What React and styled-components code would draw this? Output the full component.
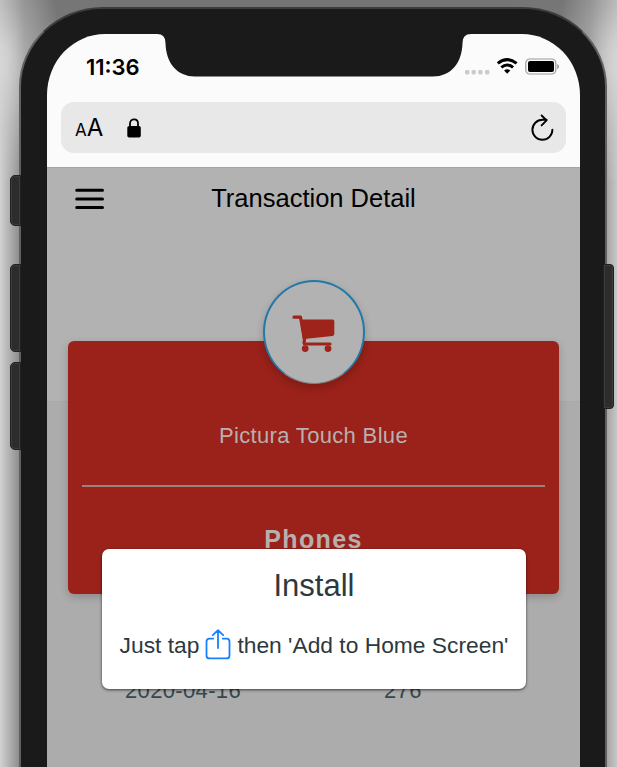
import React from "react";
import styled, { createGlobalStyle } from "styled-components";

const GlobalStyle = createGlobalStyle`
  * { box-sizing: border-box; }
  body { margin: 0; overflow: hidden; }
`;

const Stage = styled.main`
  position: relative;
  width: 617px;
  height: 767px;
  overflow: hidden;
  padding: 7px 0 0 19px;
  background:
    radial-gradient(ellipse 360px 90px at 50% 0, #747474 0%, #747474 55%, rgba(116, 116, 116, 0) 100%),
    linear-gradient(90deg, #d2d2d2 0, #7c7c7c 24px, #7c7c7c 590px, #a6a6a6 607px, #c6c6c6 617px);
  font-family: "Liberation Sans", Arial, sans-serif;
`;

const Phone = styled.div`
  position: relative;
  width: 588px;
  height: 900px;
  padding: 25px 25px 0 26px;
  border: 2px solid #606060;
  border-top-color: #3c3c3c;
  border-radius: 84px 84px 0 0 / 80px 80px 0 0;
  background: #1a1a1a;
`;

const CornerLight = styled.div`
  position: absolute;
  top: 0;
  ${(p) => p.$side}: 0;
  width: 100px;
  height: 180px;
  background: radial-gradient(
    ellipse 62px 130px at ${(p) => (p.$side === "left" ? "0" : "100%")} 64px,
    rgba(215, 215, 215, 0.9) 0%,
    rgba(205, 205, 205, 0.45) 50%,
    rgba(190, 190, 190, 0) 100%
  );
`;

const SideButton = styled.span`
  position: absolute;
  top: ${(p) => p.$top}px;
  ${(p) => p.$side}: ${(p) => (p.$side === "left" ? -11 : -9)}px;
  width: 11px;
  height: ${(p) => p.$height}px;
  border: 1px solid #202020;
  border-radius: ${(p) => (p.$side === "left" ? "5px 0 0 5px" : "0 4px 4px 0")};
  background: #2c2c2c;
  box-shadow: inset 0 0 0 1px #3c3c3c;
`;

const Screen = styled.div`
  position: relative;
  width: 533px;
  height: 733px;
  overflow: hidden;
  border-radius: 58px 58px 0 0 / 61px 61px 0 0;
  background: #fbfbfb;
`;

const Notch = styled.svg`
  position: absolute;
  top: 0;
  left: 110px;
`;

const StatusBar = styled.div`
  display: flex;
  justify-content: space-between;
  align-items: center;
  height: 68px;
  padding: 0 21px 3px 39px;
`;

const Clock = styled.time`
  font: 600 22px/26px Inter, sans-serif;
`;

const Indicators = styled.div`
  display: flex;
  align-items: center;
  height: 18px;
  padding-top: 1px;
`;

const AddressBar = styled.div`
  display: flex;
  align-items: center;
  height: 51px;
  margin: 0 14px;
  padding: 0 12px 0 14px;
  border-radius: 13px;
  background: #e8e8e8;
`;

const TextSize = styled.span`
  display: flex;
  align-items: baseline;
  width: 50px;
  padding-top: 2px;
  font: 400 17px/26px Inter, sans-serif;
`;

const LargeLetter = styled.span`
  font-size: 24px;
`;

const Reload = styled.svg`
  margin-left: auto;
`;

const WebPage = styled.div`
  height: 600px;
  margin-top: 14px;
  border-top: 1px solid #a5a5a5;
  background: #acacac;
`;

const Masthead = styled.header`
  height: 234px;
  border-bottom: 1px solid #a8a8a8;
  background: #b2b2b2;
`;

const TitleRow = styled.div`
  display: grid;
  grid-template-columns: 57px 1fr 57px;
  align-items: center;
  height: 62px;
`;

const MenuIcon = styled.svg`
  justify-self: end;
`;

const Title = styled.h1`
  margin: -2px 0 0;
  text-align: center;
  font-size: 25.5px;
  font-weight: 400;
  line-height: 30px;
  white-space: nowrap;
`;

const Card = styled.section`
  display: flex;
  flex-direction: column;
  align-items: center;
  width: 491px;
  height: 253px;
  margin: -61px 0 0 21px;
  padding: 0 14px;
  border-radius: 6px;
  background: #9a221a;
  color: #b8b0af;
  box-shadow: 0 3px 9px rgba(0, 0, 0, 0.2);
`;

const Badge = styled.div`
  display: flex;
  flex: none;
  align-items: center;
  justify-content: center;
  width: 102px;
  height: 104px;
  margin-top: -61px;
  border: 2px solid #2379a6;
  border-bottom: 1px solid #7b8084;
  border-radius: 50%;
  background: #b2b2b2;
  box-shadow: 0 4px 9px rgba(0, 0, 0, 0.2);
`;

const Product = styled.p`
  width: 100%;
  height: 64px;
  margin: 39px 0 0;
  border-bottom: 2px solid #98827f;
  text-align: center;
  font-size: 22px;
  line-height: 26px;
  letter-spacing: 0.33px;
`;

const Category = styled.h2`
  margin: 37px 0 0;
  font-size: 25px;
  line-height: 30px;
  letter-spacing: 1.4px;
`;

const Facts = styled.div`
  display: grid;
  grid-template-columns: 259px 1fr;
  padding: 84px 0 0 78px;
  color: #36474c;
  font-size: 22px;
  line-height: 26px;
  letter-spacing: 0.35px;
`;

const Prompt = styled.div`
  position: absolute;
  top: 515px;
  left: 55px;
  width: 424px;
  height: 140px;
  padding: 20px 0 0;
  border-radius: 7px;
  background: #fff;
  color: #2c393f;
  box-shadow: 0 1px 3px rgba(0, 0, 0, 0.65);
`;

const PromptTitle = styled.h3`
  margin: 0;
  text-align: center;
  font-size: 31px;
  font-weight: 400;
  line-height: 34px;
`;

const Instruction = styled.p`
  display: flex;
  align-items: center;
  justify-content: center;
  gap: 6px;
  margin: 25px 0 0;
  font-size: 22.8px;
  line-height: 34px;
  white-space: nowrap;
`;

const BUTTONS = [
  { side: "left", top: 166, height: 51 },
  { side: "left", top: 255, height: 88 },
  { side: "left", top: 353, height: 88 },
  { side: "right", top: 255, height: 145 },
];

function StatusIcons() {
  return (
    <Indicators>
      <svg width="94" height="18" viewBox="0 0 94 18">
        <g fill="#cbcbcb">
          {[0, 6.5, 13.2, 20].map((x) => (
            <rect key={x} x={x} y="12" width="4.4" height="4.4" rx="1.4" />
          ))}
        </g>
        <g fill="none" stroke="#000" strokeWidth="3">
          <path d="M32.8 5.4Q42.2-2.2 51.6 5.4" />
          <path d="M36.3 9.4Q42.2 4.6 48.1 9.4" />
        </g>
        <path d="M39.1 12.4Q42.2 9.9 45.3 12.4L42.2 15.8Z" />
        <rect x="60.8" y="1" width="30" height="15" rx="4" fill="none" stroke="#999" strokeWidth="1.2" />
        <rect x="63" y="3" width="26" height="11" rx="2" />
        <path d="M92.2 6v5.2q1.8-.8 1.8-2.6T92.2 6Z" fill="#999" />
      </svg>
    </Indicators>
  );
}

export default function App() {
  return (
    <Stage>
      <GlobalStyle />
      <CornerLight $side="left" />
      <CornerLight $side="right" />
      <Phone>
        {BUTTONS.map((b) => (
          <SideButton key={b.side + b.top} $side={b.side} $top={b.top} $height={b.height} />
        ))}
        <Screen>
          <Notch width="314" height="43" viewBox="0 0 314 43">
            <path d="M0 0Q8.5 0 8.5 9C9 29 20 42.5 38 42.5H276C294 42.5 305 29 305.5 9Q305.5 0 314 0Z" fill="#1a1a1a" />
          </Notch>
          <StatusBar>
            <Clock>11:36</Clock>
            <StatusIcons />
          </StatusBar>
          <AddressBar>
            <TextSize>A<LargeLetter>A</LargeLetter></TextSize>
            <svg width="18" height="22" viewBox="0 0 18 22">
              <path d="M5 10V6.5C5 1 13 1 13 6.5V10" fill="none" stroke="#000" strokeWidth="1.8" />
              <rect x="2.3" y="9" width="13.5" height="11.5" rx="1.8" />
            </svg>
            <Reload width="24" height="28" viewBox="0 0 24 28" fill="none" stroke="#000" strokeWidth="1.9" strokeLinecap="round" strokeLinejoin="round">
              <path d="M22.4 15.8A10 10 0 1 1 12.4 5.8H16.6M11.6 1.5L16.6 6.4L11.6 11.4" />
            </Reload>
          </AddressBar>
          <WebPage>
            <Masthead>
              <TitleRow>
                <MenuIcon width="29" height="22" viewBox="0 0 29 22" stroke="#000" strokeWidth="3" strokeLinecap="round">
                  <path d="M1.7 2.3H27.5M1.7 10.9H27.5M1.7 19.5H27.5" />
                </MenuIcon>
                <Title>Transaction Detail</Title>
              </TitleRow>
            </Masthead>
            <Card>
              <Badge>
                <svg width="44" height="38" viewBox="0 0 44 38">
                  <g fill="none" stroke="#9e231b" strokeWidth="3.2" strokeLinecap="round" strokeLinejoin="round">
                    <path d="M2 3.2H8.5L12.5 25.5L12 29" />
                    <path d="M12.5 30H38" />
                  </g>
                  <path d="M8 5.4H40.5Q42.3 5.4 42.3 7.2V20Q42.3 21.6 40.5 21.9L14.5 24.8L13 27L10.8 25Z" fill="#9e231b" />
                  <circle cx="13.2" cy="34.6" r="3.4" fill="#9e231b" />
                  <circle cx="36" cy="34.6" r="3.4" fill="#9e231b" />
                </svg>
              </Badge>
              <Product>Pictura Touch Blue</Product>
              <Category>Phones</Category>
            </Card>
            <Facts>
              <span>2020-04-16</span>
              <span>276</span>
            </Facts>
          </WebPage>
          <Prompt>
            <PromptTitle>Install</PromptTitle>
            <Instruction>
              <span>Just tap</span>
              <svg width="26" height="32" viewBox="0 0 26 32" fill="none" stroke="#1682ff" strokeWidth="1.8" strokeLinecap="round" strokeLinejoin="round">
                <path d="M8.3 9.6H4.5Q1.5 9.6 1.5 12.6V26.4Q1.5 29.4 4.5 29.4H21.5Q24.5 29.4 24.5 26.4V12.6Q24.5 9.6 21.5 9.6H17.7M13 19V1.4M7.8 6.2L13 1.2L18.2 6.2" />
              </svg>
              <span>then 'Add to Home Screen'</span>
            </Instruction>
          </Prompt>
        </Screen>
      </Phone>
    </Stage>
  );
}
